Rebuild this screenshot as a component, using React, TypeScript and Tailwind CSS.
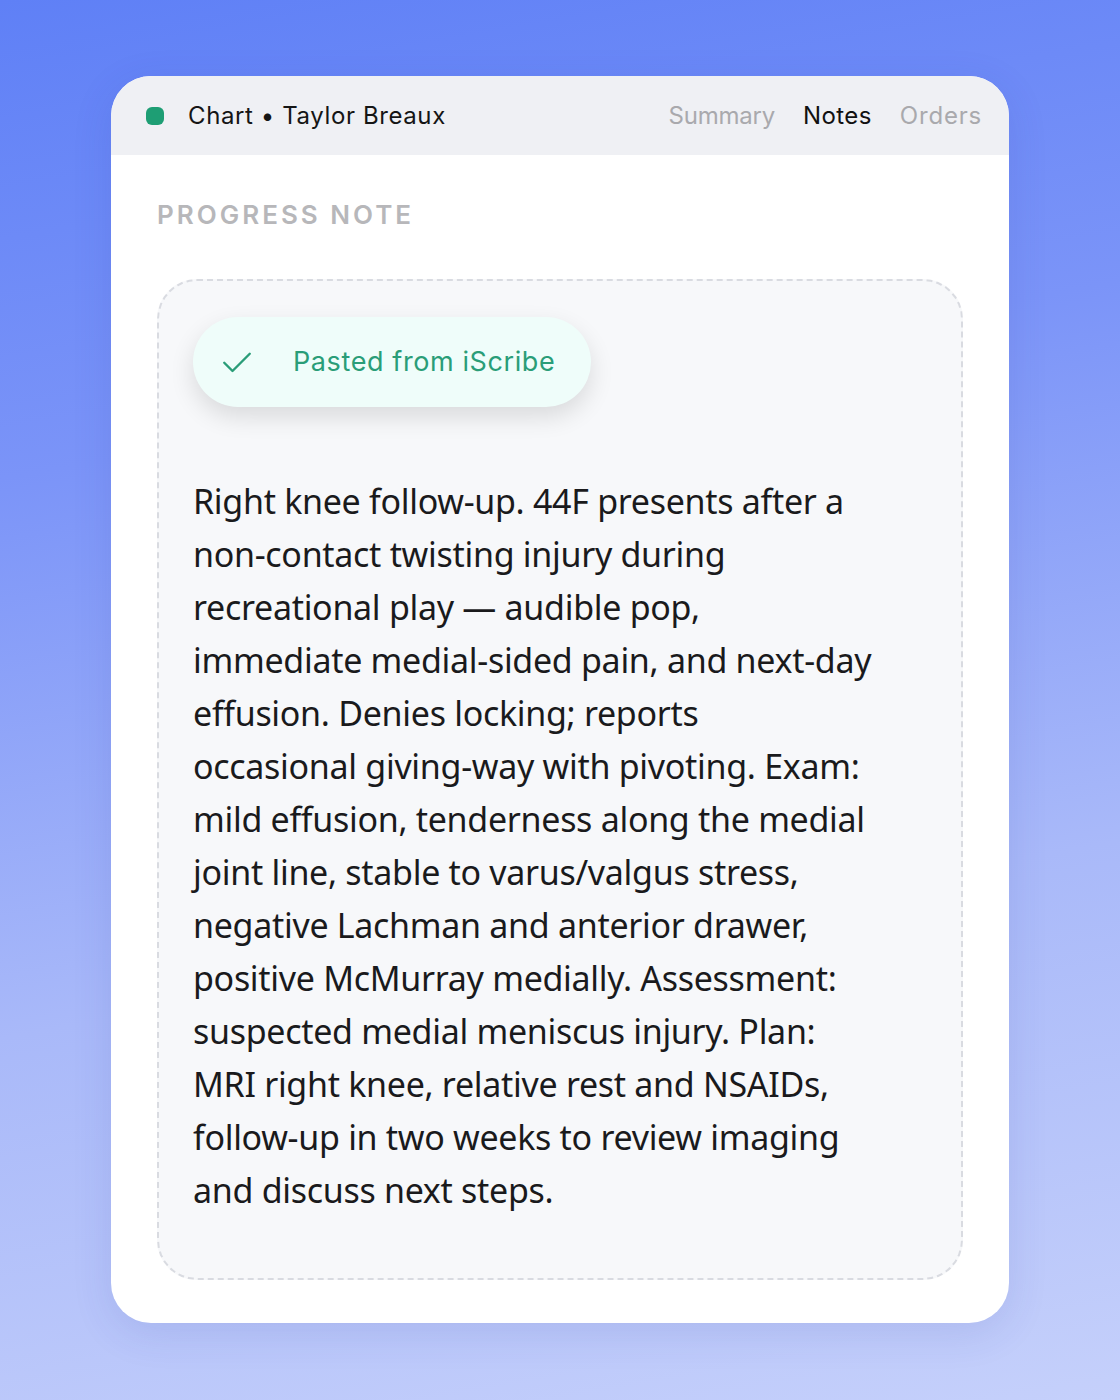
import React from 'react';

const noteLines = [
  'Right knee follow-up. 44F presents after a',
  'non-contact twisting injury during',
  'recreational play — audible pop,',
  'immediate medial-sided pain, and next-day',
  'effusion. Denies locking; reports',
  'occasional giving-way with pivoting. Exam:',
  'mild effusion, tenderness along the medial',
  'joint line, stable to varus/valgus stress,',
  'negative Lachman and anterior drawer,',
  'positive McMurray medially. Assessment:',
  'suspected medial meniscus injury. Plan:',
  'MRI right knee, relative rest and NSAIDs,',
  'follow-up in two weeks to review imaging',
  'and discuss next steps.',
];

function CheckIcon() {
  return (
    <svg width="36" height="36" viewBox="0 0 24 24" fill="none" stroke="currentColor" strokeWidth="1.6" strokeLinecap="round" strokeLinejoin="round">
      <path d="M3.5 12.5l5.5 5.5L20.5 6.5" />
    </svg>
  );
}

export default function App() {
  return (
    <div className="min-h-[1400px] w-[1120px] bg-[linear-gradient(170deg,#5f80f6_0%,#7b94f8_30%,#a9b9f9_65%,#c5d0fb_100%)] pt-[76px] pl-[111px]">
      {/* Card */}
      <div className="w-[898px] h-[1247px] rounded-[40px] bg-white overflow-hidden shadow-[0_10px_40px_rgba(40,60,160,0.12)]">
        {/* Header */}
        <div className="h-[79px] bg-[#eff0f4] flex items-center pl-[35px] pr-[27px] font-['Inter',sans-serif] text-[24px]">
          <div className="w-[18px] h-[18px] rounded-[6px] bg-[#1e9e74]" />
          <div className="ml-[24px] text-[#151515] tracking-[0.6px]">Chart • Taylor Breaux</div>
          <div className="ml-auto flex items-center gap-[28px] tracking-[0.4px]">
            <span className="text-[#a9a9ad] tracking-[-0.2px]">Summary</span>
            <span className="text-[#111]">Notes</span>
            <span className="text-[#a9a9ad] tracking-[0.8px]">Orders</span>
          </div>
        </div>

        {/* Body */}
        <div className="px-[46px] pt-[44px]">
          <div className="font-['Inter',sans-serif] font-semibold text-[26px] tracking-[3px] text-[#b7b7ba] leading-[32px]">
            PROGRESS NOTE
          </div>

          <div className="mt-[48px] h-[1001px] rounded-[40px] border-2 border-dashed border-[#d9dbe1] bg-[#f7f8fa] pl-[34px] pr-[40px] pt-[36px]">
            <div className="inline-flex items-center h-[90px] rounded-full bg-[#effdfa] pl-[26px] pr-[36px] shadow-[0_10px_24px_rgba(0,0,0,0.12)] text-[#2a9d78] font-['Inter',sans-serif] text-[27px] tracking-[0.6px]">
              <CheckIcon />
              <span className="ml-[38px]">Pasted from iScribe</span>
            </div>

            <div className="mt-[68px] font-['Noto_Sans',sans-serif] text-[34px] leading-[53px] text-[#1a1a1c] tracking-[-0.3px]">
              {noteLines.map((line, i) => (
                <div key={i} className="whitespace-nowrap">{line}</div>
              ))}
            </div>
          </div>
        </div>
      </div>
    </div>
  );
}
